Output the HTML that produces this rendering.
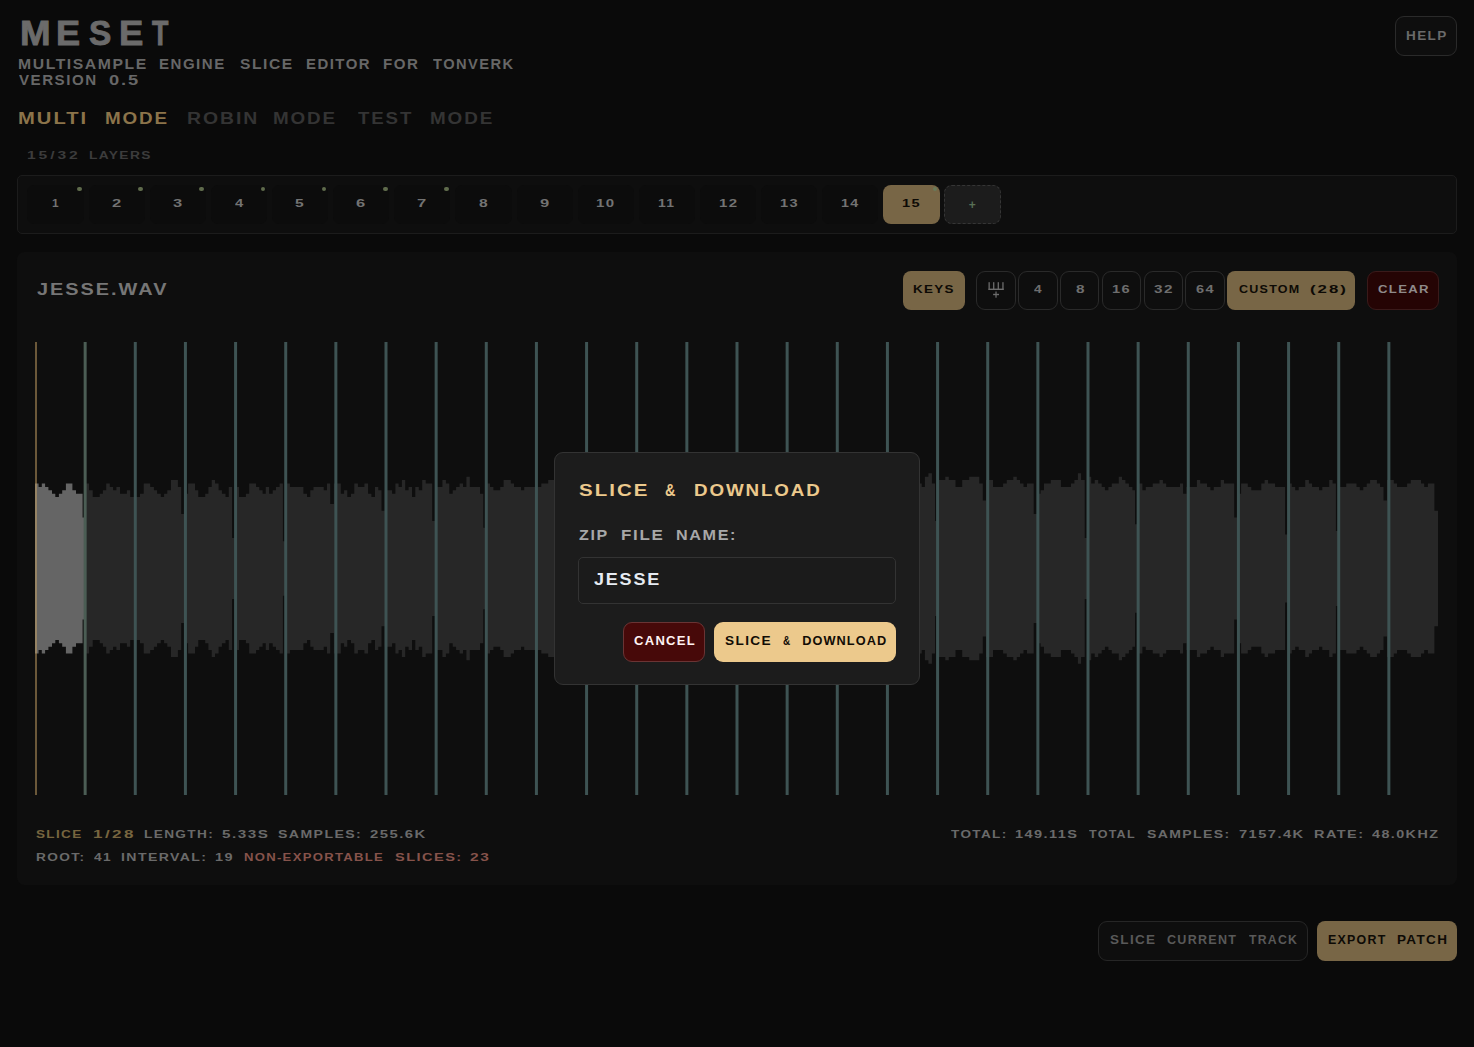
<!DOCTYPE html>
<html lang="en"><head><meta charset="utf-8"><title>MESET - Multisample Engine Slice Editor for Tonverk</title>
<style>
html,body{margin:0;padding:0;background:#0a0a0a;}
body{width:1474px;height:1047px;overflow:hidden;position:relative;font-family:'Liberation Sans',sans-serif;}
#app,#overlay{position:absolute;left:0;top:0;width:1474px;height:1047px;}
.t{position:absolute;transform-origin:0 0;font-weight:bold;white-space:pre;text-transform:uppercase;font-family:'Liberation Sans',sans-serif;}
.b{position:absolute;box-sizing:border-box;}
.wave{position:absolute;display:block;}
.l{position:static;margin:0;}

</style></head><body>
<div id="app">
<div class="b" style="left:1395.0px;top:16.0px;width:62.0px;height:40.0px;border:1px solid #2a2a2a;border-radius:9px;background:#0e0e0e"></div>
<div class="b" style="left:17.2px;top:175.3px;width:1439.8px;height:58.3px;border:1px solid #1c1c1c;border-radius:5px;background:#0e0e0e"></div>
<div class="b" style="left:27.4px;top:185.0px;width:56.2px;height:38.6px;border-radius:7px;background:#0c0c0c"></div>
<div class="b" style="left:77.0px;top:186.5px;width:4.8px;height:4.8px;border-radius:50%;background:#5f6b4c"></div>
<div class="b" style="left:88.5px;top:185.0px;width:56.2px;height:38.6px;border-radius:7px;background:#0c0c0c"></div>
<div class="b" style="left:138.2px;top:186.5px;width:4.8px;height:4.8px;border-radius:50%;background:#5f6b4c"></div>
<div class="b" style="left:149.7px;top:185.0px;width:56.2px;height:38.6px;border-radius:7px;background:#0c0c0c"></div>
<div class="b" style="left:199.3px;top:186.5px;width:4.8px;height:4.8px;border-radius:50%;background:#5f6b4c"></div>
<div class="b" style="left:210.8px;top:185.0px;width:56.2px;height:38.6px;border-radius:7px;background:#0c0c0c"></div>
<div class="b" style="left:260.5px;top:186.5px;width:4.8px;height:4.8px;border-radius:50%;background:#5f6b4c"></div>
<div class="b" style="left:272.0px;top:185.0px;width:56.2px;height:38.6px;border-radius:7px;background:#0c0c0c"></div>
<div class="b" style="left:321.6px;top:186.5px;width:4.8px;height:4.8px;border-radius:50%;background:#5f6b4c"></div>
<div class="b" style="left:333.1px;top:185.0px;width:56.2px;height:38.6px;border-radius:7px;background:#0c0c0c"></div>
<div class="b" style="left:382.8px;top:186.5px;width:4.8px;height:4.8px;border-radius:50%;background:#5f6b4c"></div>
<div class="b" style="left:394.3px;top:185.0px;width:56.2px;height:38.6px;border-radius:7px;background:#0c0c0c"></div>
<div class="b" style="left:443.9px;top:186.5px;width:4.8px;height:4.8px;border-radius:50%;background:#5f6b4c"></div>
<div class="b" style="left:455.4px;top:185.0px;width:56.2px;height:38.6px;border-radius:7px;background:#0c0c0c"></div>
<div class="b" style="left:516.6px;top:185.0px;width:56.2px;height:38.6px;border-radius:7px;background:#0c0c0c"></div>
<div class="b" style="left:577.8px;top:185.0px;width:56.2px;height:38.6px;border-radius:7px;background:#0c0c0c"></div>
<div class="b" style="left:638.9px;top:185.0px;width:56.2px;height:38.6px;border-radius:7px;background:#0c0c0c"></div>
<div class="b" style="left:700.0px;top:185.0px;width:56.2px;height:38.6px;border-radius:7px;background:#0c0c0c"></div>
<div class="b" style="left:761.2px;top:185.0px;width:56.2px;height:38.6px;border-radius:7px;background:#0c0c0c"></div>
<div class="b" style="left:822.3px;top:185.0px;width:56.2px;height:38.6px;border-radius:7px;background:#0c0c0c"></div>
<div class="b" style="left:882.8px;top:184.7px;width:57.5px;height:39.5px;border-radius:8px;background:#786646"></div>
<div class="b" style="left:932.8px;top:187px;width:4.2px;height:4.2px;border-radius:50%;background:#6a7a5a"></div>
<div class="b" style="left:944.1px;top:184.7px;width:57.1px;height:39.5px;border:1px dashed #353535;border-radius:8px;background:#1c1c1c"></div>
<div class="b" style="left:17.0px;top:252.0px;width:1440.0px;height:633.0px;border-radius:7.5px;background:#0e0e0e"></div>
<div class="b" style="left:903.0px;top:270.8px;width:62.0px;height:39.2px;border-radius:8px;background:#786646"></div>
<div class="b" style="left:976.1px;top:270.8px;width:39.7px;height:39.2px;border:1px solid #2a2a2a;border-radius:9px;background:#0e0e0e"></div>
<div class="b" style="left:1018.2px;top:270.8px;width:39.5px;height:39.2px;border:1px solid #2a2a2a;border-radius:9px;background:#0e0e0e"></div>
<div class="b" style="left:1060.0px;top:270.8px;width:38.8px;height:39.2px;border:1px solid #2a2a2a;border-radius:9px;background:#0e0e0e"></div>
<div class="b" style="left:1102.0px;top:270.8px;width:38.5px;height:39.2px;border:1px solid #2a2a2a;border-radius:9px;background:#0e0e0e"></div>
<div class="b" style="left:1143.9px;top:270.8px;width:38.8px;height:39.2px;border:1px solid #2a2a2a;border-radius:9px;background:#0e0e0e"></div>
<div class="b" style="left:1185.4px;top:270.8px;width:39.3px;height:39.2px;border:1px solid #2a2a2a;border-radius:9px;background:#0e0e0e"></div>
<div class="b" style="left:1226.9px;top:270.8px;width:128.3px;height:39.2px;border-radius:8px;background:#786646"></div>
<div class="b" style="left:1367.2px;top:270.8px;width:71.6px;height:39.2px;border:1px solid #3a1a1a;border-radius:9px;background:#250404"></div>
<svg class="wave" style="left:984px;top:278px" width="24" height="24" viewBox="0 0 24 24"><g fill="#6c6c6c"><rect x="4.5" y="4.2" width="1.3" height="7.8"/><rect x="9.05" y="4.2" width="1.3" height="7.8"/><rect x="13.65" y="4.2" width="1.3" height="7.8"/><rect x="18.3" y="4.2" width="1.3" height="7.8"/><rect x="4.5" y="10.6" width="15.1" height="1.4"/><rect x="9.1" y="15.8" width="5.9" height="1.4"/><rect x="11.4" y="13.5" width="1.25" height="6.2"/></g></svg>
<div class="b" style="left:1098.0px;top:921.0px;width:210.0px;height:40.0px;border:1px solid #262626;border-radius:9px;background:#0e0e0e"></div>
<div class="b" style="left:1317.0px;top:921.0px;width:140.0px;height:40.0px;border-radius:8px;background:#786646"></div>
<svg class="wave" width="1404" height="453" viewBox="0 0 1404 453" style="left:35px;top:342px"><path d="M50.6,226.5L50.6,175.5L50.9,175.5L50.9,141.5L54.1,141.5L54.1,148.3L57.7,148.3L57.7,155.1L64.7,155.1L64.7,151.7L67.9,151.7L67.9,148.3L71.2,148.3L71.2,141.5L74.8,141.5L74.8,144.9L78.1,144.9L78.1,148.3L81.4,148.3L81.4,144.9L85.0,144.9L85.0,151.7L91.9,151.7L91.9,148.3L95.2,148.3L95.2,155.1L105.0,155.1L105.0,151.7L108.7,151.7L108.7,141.5L115.2,141.5L115.2,144.9L118.9,144.9L118.9,148.3L122.1,148.3L122.1,151.7L125.8,151.7L125.8,155.1L129.1,155.1L129.1,151.7L132.3,151.7L132.3,148.3L136.0,148.3L136.0,138.1L142.9,138.1L142.9,144.9L146.2,144.9L146.2,172.1L149.5,172.1L149.5,151.7L153.1,151.7L153.1,141.5L160.0,141.5L160.0,148.3L163.3,148.3L163.3,155.1L170.2,155.1L170.2,151.7L173.4,151.7L173.4,144.9L176.7,144.9L176.7,138.1L180.0,138.1L180.0,141.5L183.6,141.5L183.6,148.3L186.9,148.3L186.9,151.7L190.5,151.7L190.5,155.1L193.8,155.1L193.8,144.9L197.1,144.9L197.1,195.9L200.4,195.9L200.4,144.9L204.0,144.9L204.0,155.1L210.9,155.1L210.9,151.7L214.2,151.7L214.2,141.5L221.1,141.5L221.1,144.9L224.3,144.9L224.3,148.3L227.6,148.3L227.6,151.7L230.8,151.7L230.8,144.9L234.1,144.9L234.1,151.7L237.7,151.7L237.7,148.3L241.0,148.3L241.0,144.9L244.6,144.9L244.6,141.5L247.9,141.5L247.9,199.3L251.2,199.3L251.2,141.5L254.9,141.5L254.9,144.9L268.4,144.9L268.4,151.7L272.0,151.7L272.0,155.1L275.3,155.1L275.3,148.3L278.5,148.3L278.5,144.9L288.7,144.9L288.7,148.3L292.0,148.3L292.0,141.5L295.2,141.5L295.2,161.9L298.9,161.9L298.9,141.5L305.8,141.5L305.8,151.7L309.1,151.7L309.1,148.3L312.3,148.3L312.3,155.1L316.0,155.1L316.0,151.7L319.3,151.7L319.3,141.5L322.9,141.5L322.9,144.9L329.4,144.9L329.4,141.5L333.1,141.5L333.1,151.7L336.4,151.7L336.4,155.1L340.0,155.1L340.0,144.9L343.3,144.9L343.3,148.3L346.5,148.3L346.5,168.7L349.8,168.7L349.8,148.3L357.1,148.3L357.1,151.7L360.4,151.7L360.4,141.5L363.6,141.5L363.6,144.9L366.9,144.9L366.9,138.1L370.2,138.1L370.2,148.3L373.6,148.3L373.6,144.9L377.0,144.9L377.0,155.1L380.3,155.1L380.3,144.9L383.8,144.9L383.8,148.3L387.2,148.3L387.2,138.1L390.7,138.1L390.7,141.5L397.2,141.5L397.2,178.9L400.5,178.9L400.5,144.9L407.4,144.9L407.4,138.1L410.9,138.1L410.9,141.5L414.3,141.5L414.3,151.7L417.7,151.7L417.7,148.3L421.1,148.3L421.1,144.9L424.6,144.9L424.6,141.5L428.0,141.5L428.0,144.9L431.4,144.9L431.4,134.7L434.8,134.7L434.8,144.9L445.0,144.9L445.0,151.7L448.3,151.7L448.3,185.7L451.5,185.7L451.5,141.5L455.0,141.5L455.0,144.9L458.4,144.9L458.4,148.3L465.2,148.3L465.2,144.9L468.6,144.9L468.6,138.1L475.8,138.1L475.8,141.5L479.0,141.5L479.0,144.9L486.0,144.9L486.0,148.3L489.2,148.3L489.2,144.9L506.3,144.9L506.3,141.5L513.2,141.5L513.2,138.1L519.2,138.1L519.2,144.9L520.0,144.9L520.0,148.3L523.2,148.3L523.2,151.7L526.9,151.7L526.9,155.1L530.2,155.1L530.2,151.7L533.4,151.7L533.4,148.3L537.1,148.3L537.1,138.1L544.0,138.1L544.0,144.9L547.3,144.9L547.3,172.1L550.6,172.1L550.6,151.7L554.2,151.7L554.2,141.5L561.1,141.5L561.1,148.3L564.4,148.3L564.4,155.1L571.3,155.1L571.3,151.7L574.5,151.7L574.5,144.9L577.8,144.9L577.8,138.1L581.1,138.1L581.1,141.5L584.7,141.5L584.7,148.3L588.0,148.3L588.0,151.7L591.6,151.7L591.6,155.1L594.9,155.1L594.9,144.9L598.2,144.9L598.2,195.9L601.5,195.9L601.5,144.9L605.1,144.9L605.1,155.1L612.0,155.1L612.0,151.7L615.3,151.7L615.3,141.5L622.2,141.5L622.2,144.9L625.4,144.9L625.4,148.3L628.7,148.3L628.7,151.7L631.9,151.7L631.9,144.9L635.2,144.9L635.2,151.7L638.8,151.7L638.8,148.3L642.1,148.3L642.1,144.9L645.7,144.9L645.7,141.5L649.0,141.5L649.0,199.3L652.3,199.3L652.3,141.5L656.0,141.5L656.0,144.9L669.5,144.9L669.5,151.7L673.1,151.7L673.1,155.1L676.4,155.1L676.4,148.3L679.6,148.3L679.6,144.9L689.8,144.9L689.8,148.3L693.1,148.3L693.1,141.5L696.3,141.5L696.3,161.9L700.0,161.9L700.0,141.5L706.9,141.5L706.9,151.7L710.2,151.7L710.2,148.3L713.4,148.3L713.4,155.1L717.1,155.1L717.1,151.7L720.4,151.7L720.4,141.5L724.0,141.5L724.0,144.9L730.5,144.9L730.5,141.5L734.2,141.5L734.2,151.7L737.5,151.7L737.5,155.1L741.1,155.1L741.1,144.9L744.4,144.9L744.4,148.3L747.6,148.3L747.6,168.7L750.9,168.7L750.9,148.3L758.2,148.3L758.2,151.7L761.5,151.7L761.5,141.5L764.7,141.5L764.7,144.9L768.0,144.9L768.0,138.1L771.3,138.1L771.3,148.3L774.7,148.3L774.7,144.9L778.1,144.9L778.1,155.1L781.4,155.1L781.4,144.9L784.9,144.9L784.9,148.3L788.3,148.3L788.3,138.1L791.8,138.1L791.8,141.5L798.3,141.5L798.3,178.9L801.6,178.9L801.6,144.9L808.5,144.9L808.5,138.1L812.0,138.1L812.0,141.5L815.4,141.5L815.4,151.7L818.8,151.7L818.8,148.3L822.2,148.3L822.2,144.9L825.7,144.9L825.7,141.5L829.1,141.5L829.1,144.9L832.5,144.9L832.5,134.7L835.9,134.7L835.9,144.9L846.1,144.9L846.1,151.7L849.4,151.7L849.4,185.7L852.6,185.7L852.6,141.5L856.1,141.5L856.1,144.9L859.5,144.9L859.5,148.3L866.3,148.3L866.3,144.9L869.7,144.9L869.7,138.1L876.9,138.1L876.9,141.5L880.1,141.5L880.1,144.9L884.9,144.9L884.9,141.5L886.7,141.5L886.7,144.9L889.9,144.9L889.9,134.7L893.4,134.7L893.4,131.3L896.9,131.3L896.9,141.5L900.1,141.5L900.1,178.9L903.3,178.9L903.3,138.1L910.3,138.1L910.3,134.7L913.8,134.7L913.8,138.1L920.5,138.1L920.5,144.9L927.2,144.9L927.2,138.1L934.2,138.1L934.2,134.7L944.3,134.7L944.3,141.5L947.8,141.5L947.8,158.5L951.0,158.5L951.0,138.1L958.0,138.1L958.0,144.9L968.1,144.9L968.1,141.5L971.8,141.5L971.8,138.1L978.3,138.1L978.3,134.7L981.8,134.7L981.8,138.1L985.0,138.1L985.0,141.5L988.5,141.5L988.5,144.9L992.0,144.9L992.0,141.5L998.7,141.5L998.7,172.1L1002.0,172.1L1002.0,151.7L1005.6,151.7L1005.6,148.3L1009.0,148.3L1009.0,141.5L1015.8,141.5L1015.8,138.1L1025.9,138.1L1025.9,144.9L1036.0,144.9L1036.0,141.5L1039.4,141.5L1039.4,138.1L1042.9,138.1L1042.9,131.3L1046.1,131.3L1046.1,138.1L1049.7,138.1L1049.7,195.9L1053.0,195.9L1053.0,134.7L1056.2,134.7L1056.2,141.5L1059.7,141.5L1059.7,138.1L1063.2,138.1L1063.2,141.5L1066.7,141.5L1066.7,144.9L1069.9,144.9L1069.9,148.3L1073.4,148.3L1073.4,144.9L1076.8,144.9L1076.8,141.5L1083.8,141.5L1083.8,134.7L1087.0,134.7L1087.0,138.1L1090.4,138.1L1090.4,141.5L1093.9,141.5L1093.9,144.9L1097.4,144.9L1097.4,148.3L1100.0,148.3L1100.0,182.3L1103.3,182.3L1103.3,141.5L1107.4,141.5L1107.4,148.3L1110.8,148.3L1110.8,144.9L1117.7,144.9L1117.7,141.5L1124.5,141.5L1124.5,138.1L1127.9,138.1L1127.9,141.5L1131.2,141.5L1131.2,144.9L1145.0,144.9L1145.0,141.5L1148.1,141.5L1148.1,151.7L1151.5,151.7L1151.5,144.9L1161.9,144.9L1161.9,138.1L1165.2,138.1L1165.2,141.5L1172.0,141.5L1172.0,144.9L1175.4,144.9L1175.4,148.3L1178.8,148.3L1178.8,144.9L1185.7,144.9L1185.7,138.1L1189.0,138.1L1189.0,141.5L1199.2,141.5L1199.2,175.5L1202.5,175.5L1202.5,151.7L1206.1,151.7L1206.1,141.5L1212.8,141.5L1212.8,144.9L1216.3,144.9L1216.3,148.3L1226.3,148.3L1226.3,141.5L1229.6,141.5L1229.6,138.1L1233.1,138.1L1233.1,141.5L1240.1,141.5L1240.1,144.9L1250.1,144.9L1250.1,192.5L1253.4,192.5L1253.4,141.5L1256.8,141.5L1256.8,144.9L1260.2,144.9L1260.2,148.3L1263.7,148.3L1263.7,144.9L1270.2,144.9L1270.2,138.1L1273.9,138.1L1273.9,141.5L1277.1,141.5L1277.1,144.9L1284.0,144.9L1284.0,148.3L1287.3,148.3L1287.3,144.9L1294.2,144.9L1294.2,138.1L1297.6,138.1L1297.6,141.5L1300.9,141.5L1300.9,189.1L1304.2,189.1L1304.2,144.9L1311.2,144.9L1311.2,141.5L1321.5,141.5L1321.5,144.9L1324.8,144.9L1324.8,148.3L1328.3,148.3L1328.3,144.9L1331.7,144.9L1331.7,141.5L1335.1,141.5L1335.1,138.1L1341.9,138.1L1341.9,141.5L1345.1,141.5L1345.1,144.9L1348.5,144.9L1348.5,158.5L1352.0,158.5L1352.0,138.1L1358.8,138.1L1358.8,141.5L1362.0,141.5L1362.0,144.9L1372.1,144.9L1372.1,141.5L1375.8,141.5L1375.8,138.1L1386.0,138.1L1386.0,141.5L1389.2,141.5L1389.2,144.9L1392.9,144.9L1392.9,141.5L1399.4,141.5L1399.4,168.7L1403.0,168.7L1403.0,226.5L1403.0,284.3L1399.4,284.3L1399.4,311.5L1392.9,311.5L1392.9,308.1L1389.2,308.1L1389.2,311.5L1386.0,311.5L1386.0,314.9L1375.8,314.9L1375.8,311.5L1372.1,311.5L1372.1,308.1L1362.0,308.1L1362.0,311.5L1358.8,311.5L1358.8,314.9L1352.0,314.9L1352.0,294.5L1348.5,294.5L1348.5,308.1L1345.1,308.1L1345.1,311.5L1341.9,311.5L1341.9,314.9L1335.1,314.9L1335.1,311.5L1331.7,311.5L1331.7,308.1L1328.3,308.1L1328.3,304.7L1324.8,304.7L1324.8,308.1L1321.5,308.1L1321.5,311.5L1311.2,311.5L1311.2,308.1L1304.2,308.1L1304.2,263.9L1300.9,263.9L1300.9,311.5L1297.6,311.5L1297.6,314.9L1294.2,314.9L1294.2,308.1L1287.3,308.1L1287.3,304.7L1284.0,304.7L1284.0,308.1L1277.1,308.1L1277.1,311.5L1273.9,311.5L1273.9,314.9L1270.2,314.9L1270.2,308.1L1263.7,308.1L1263.7,304.7L1260.2,304.7L1260.2,308.1L1256.8,308.1L1256.8,311.5L1253.4,311.5L1253.4,260.5L1250.1,260.5L1250.1,308.1L1240.1,308.1L1240.1,311.5L1233.1,311.5L1233.1,314.9L1229.6,314.9L1229.6,311.5L1226.3,311.5L1226.3,304.7L1216.3,304.7L1216.3,308.1L1212.8,308.1L1212.8,311.5L1206.1,311.5L1206.1,301.3L1202.5,301.3L1202.5,277.5L1199.2,277.5L1199.2,311.5L1189.0,311.5L1189.0,314.9L1185.7,314.9L1185.7,308.1L1178.8,308.1L1178.8,304.7L1175.4,304.7L1175.4,308.1L1172.0,308.1L1172.0,311.5L1165.2,311.5L1165.2,314.9L1161.9,314.9L1161.9,308.1L1151.5,308.1L1151.5,301.3L1148.1,301.3L1148.1,311.5L1145.0,311.5L1145.0,308.1L1131.2,308.1L1131.2,311.5L1127.9,311.5L1127.9,314.9L1124.5,314.9L1124.5,311.5L1117.7,311.5L1117.7,308.1L1110.8,308.1L1110.8,304.7L1107.4,304.7L1107.4,311.5L1103.3,311.5L1103.3,270.7L1100.0,270.7L1100.0,304.7L1097.4,304.7L1097.4,308.1L1093.9,308.1L1093.9,311.5L1090.4,311.5L1090.4,314.9L1087.0,314.9L1087.0,318.3L1083.8,318.3L1083.8,311.5L1076.8,311.5L1076.8,308.1L1073.4,308.1L1073.4,304.7L1069.9,304.7L1069.9,308.1L1066.7,308.1L1066.7,311.5L1063.2,311.5L1063.2,314.9L1059.7,314.9L1059.7,311.5L1056.2,311.5L1056.2,318.3L1053.0,318.3L1053.0,257.1L1049.7,257.1L1049.7,314.9L1046.1,314.9L1046.1,321.7L1042.9,321.7L1042.9,314.9L1039.4,314.9L1039.4,311.5L1036.0,311.5L1036.0,308.1L1025.9,308.1L1025.9,314.9L1015.8,314.9L1015.8,311.5L1009.0,311.5L1009.0,304.7L1005.6,304.7L1005.6,301.3L1002.0,301.3L1002.0,280.9L998.7,280.9L998.7,311.5L992.0,311.5L992.0,308.1L988.5,308.1L988.5,311.5L985.0,311.5L985.0,314.9L981.8,314.9L981.8,318.3L978.3,318.3L978.3,314.9L971.8,314.9L971.8,311.5L968.1,311.5L968.1,308.1L958.0,308.1L958.0,314.9L951.0,314.9L951.0,294.5L947.8,294.5L947.8,311.5L944.3,311.5L944.3,318.3L934.2,318.3L934.2,314.9L927.2,314.9L927.2,308.1L920.5,308.1L920.5,314.9L913.8,314.9L913.8,318.3L910.3,318.3L910.3,314.9L903.3,314.9L903.3,274.1L900.1,274.1L900.1,311.5L896.9,311.5L896.9,321.7L893.4,321.7L893.4,318.3L889.9,318.3L889.9,308.1L886.7,308.1L886.7,311.5L884.9,311.5L884.9,308.1L880.1,308.1L880.1,311.5L876.9,311.5L876.9,314.9L869.7,314.9L869.7,308.1L866.3,308.1L866.3,304.7L859.5,304.7L859.5,308.1L856.1,308.1L856.1,311.5L852.6,311.5L852.6,267.3L849.4,267.3L849.4,301.3L846.1,301.3L846.1,308.1L835.9,308.1L835.9,318.3L832.5,318.3L832.5,308.1L829.1,308.1L829.1,311.5L825.7,311.5L825.7,308.1L822.2,308.1L822.2,304.7L818.8,304.7L818.8,301.3L815.4,301.3L815.4,311.5L812.0,311.5L812.0,314.9L808.5,314.9L808.5,308.1L801.6,308.1L801.6,274.1L798.3,274.1L798.3,311.5L791.8,311.5L791.8,314.9L788.3,314.9L788.3,304.7L784.9,304.7L784.9,308.1L781.4,308.1L781.4,297.9L778.1,297.9L778.1,308.1L774.7,308.1L774.7,304.7L771.3,304.7L771.3,314.9L768.0,314.9L768.0,308.1L764.7,308.1L764.7,311.5L761.5,311.5L761.5,301.3L758.2,301.3L758.2,304.7L750.9,304.7L750.9,284.3L747.6,284.3L747.6,304.7L744.4,304.7L744.4,308.1L741.1,308.1L741.1,297.9L737.5,297.9L737.5,301.3L734.2,301.3L734.2,311.5L730.5,311.5L730.5,308.1L724.0,308.1L724.0,311.5L720.4,311.5L720.4,301.3L717.1,301.3L717.1,297.9L713.4,297.9L713.4,304.7L710.2,304.7L710.2,301.3L706.9,301.3L706.9,311.5L700.0,311.5L700.0,291.1L696.3,291.1L696.3,311.5L693.1,311.5L693.1,304.7L689.8,304.7L689.8,308.1L679.6,308.1L679.6,304.7L676.4,304.7L676.4,297.9L673.1,297.9L673.1,301.3L669.5,301.3L669.5,308.1L656.0,308.1L656.0,311.5L652.3,311.5L652.3,253.7L649.0,253.7L649.0,311.5L645.7,311.5L645.7,308.1L642.1,308.1L642.1,304.7L638.8,304.7L638.8,301.3L635.2,301.3L635.2,308.1L631.9,308.1L631.9,301.3L628.7,301.3L628.7,304.7L625.4,304.7L625.4,308.1L622.2,308.1L622.2,311.5L615.3,311.5L615.3,301.3L612.0,301.3L612.0,297.9L605.1,297.9L605.1,308.1L601.5,308.1L601.5,257.1L598.2,257.1L598.2,308.1L594.9,308.1L594.9,297.9L591.6,297.9L591.6,301.3L588.0,301.3L588.0,304.7L584.7,304.7L584.7,311.5L581.1,311.5L581.1,314.9L577.8,314.9L577.8,308.1L574.5,308.1L574.5,301.3L571.3,301.3L571.3,297.9L564.4,297.9L564.4,304.7L561.1,304.7L561.1,311.5L554.2,311.5L554.2,301.3L550.6,301.3L550.6,280.9L547.3,280.9L547.3,308.1L544.0,308.1L544.0,314.9L537.1,314.9L537.1,304.7L533.4,304.7L533.4,301.3L530.2,301.3L530.2,297.9L526.9,297.9L526.9,301.3L523.2,301.3L523.2,304.7L520.0,304.7L520.0,308.1L519.2,308.1L519.2,314.9L513.2,314.9L513.2,311.5L506.3,311.5L506.3,308.1L489.2,308.1L489.2,304.7L486.0,304.7L486.0,308.1L479.0,308.1L479.0,311.5L475.8,311.5L475.8,314.9L468.6,314.9L468.6,308.1L465.2,308.1L465.2,304.7L458.4,304.7L458.4,308.1L455.0,308.1L455.0,311.5L451.5,311.5L451.5,267.3L448.3,267.3L448.3,301.3L445.0,301.3L445.0,308.1L434.8,308.1L434.8,318.3L431.4,318.3L431.4,308.1L428.0,308.1L428.0,311.5L424.6,311.5L424.6,308.1L421.1,308.1L421.1,304.7L417.7,304.7L417.7,301.3L414.3,301.3L414.3,311.5L410.9,311.5L410.9,314.9L407.4,314.9L407.4,308.1L400.5,308.1L400.5,274.1L397.2,274.1L397.2,311.5L390.7,311.5L390.7,314.9L387.2,314.9L387.2,304.7L383.8,304.7L383.8,308.1L380.3,308.1L380.3,297.9L377.0,297.9L377.0,308.1L373.6,308.1L373.6,304.7L370.2,304.7L370.2,314.9L366.9,314.9L366.9,308.1L363.6,308.1L363.6,311.5L360.4,311.5L360.4,301.3L357.1,301.3L357.1,304.7L349.8,304.7L349.8,284.3L346.5,284.3L346.5,304.7L343.3,304.7L343.3,308.1L340.0,308.1L340.0,297.9L336.4,297.9L336.4,301.3L333.1,301.3L333.1,311.5L329.4,311.5L329.4,308.1L322.9,308.1L322.9,311.5L319.3,311.5L319.3,301.3L316.0,301.3L316.0,297.9L312.3,297.9L312.3,304.7L309.1,304.7L309.1,301.3L305.8,301.3L305.8,311.5L298.9,311.5L298.9,291.1L295.2,291.1L295.2,311.5L292.0,311.5L292.0,304.7L288.7,304.7L288.7,308.1L278.5,308.1L278.5,304.7L275.3,304.7L275.3,297.9L272.0,297.9L272.0,301.3L268.4,301.3L268.4,308.1L254.9,308.1L254.9,311.5L251.2,311.5L251.2,253.7L247.9,253.7L247.9,311.5L244.6,311.5L244.6,308.1L241.0,308.1L241.0,304.7L237.7,304.7L237.7,301.3L234.1,301.3L234.1,308.1L230.8,308.1L230.8,301.3L227.6,301.3L227.6,304.7L224.3,304.7L224.3,308.1L221.1,308.1L221.1,311.5L214.2,311.5L214.2,301.3L210.9,301.3L210.9,297.9L204.0,297.9L204.0,308.1L200.4,308.1L200.4,257.1L197.1,257.1L197.1,308.1L193.8,308.1L193.8,297.9L190.5,297.9L190.5,301.3L186.9,301.3L186.9,304.7L183.6,304.7L183.6,311.5L180.0,311.5L180.0,314.9L176.7,314.9L176.7,308.1L173.4,308.1L173.4,301.3L170.2,301.3L170.2,297.9L163.3,297.9L163.3,304.7L160.0,304.7L160.0,311.5L153.1,311.5L153.1,301.3L149.5,301.3L149.5,280.9L146.2,280.9L146.2,308.1L142.9,308.1L142.9,314.9L136.0,314.9L136.0,304.7L132.3,304.7L132.3,301.3L129.1,301.3L129.1,297.9L125.8,297.9L125.8,301.3L122.1,301.3L122.1,304.7L118.9,304.7L118.9,308.1L115.2,308.1L115.2,311.5L108.7,311.5L108.7,301.3L105.0,301.3L105.0,297.9L95.2,297.9L95.2,304.7L91.9,304.7L91.9,301.3L85.0,301.3L85.0,308.1L81.4,308.1L81.4,304.7L78.1,304.7L78.1,308.1L74.8,308.1L74.8,311.5L71.2,311.5L71.2,304.7L67.9,304.7L67.9,301.3L64.7,301.3L64.7,297.9L57.7,297.9L57.7,304.7L54.1,304.7L54.1,311.5L50.9,311.5L50.9,277.5L50.6,277.5Z" fill="#272727"/><path d="M0.0,226.5L0.0,141.5L3.6,141.5L3.6,144.9L6.8,144.9L6.8,141.5L10.1,141.5L10.1,144.9L13.4,144.9L13.4,148.3L17.0,148.3L17.0,151.7L20.3,151.7L20.3,155.1L23.9,155.1L23.9,151.7L27.2,151.7L27.2,148.3L30.9,148.3L30.9,141.5L37.4,141.5L37.4,148.3L41.0,148.3L41.0,151.7L47.6,151.7L47.6,175.5L50.6,175.5L50.6,226.5L50.6,277.5L47.6,277.5L47.6,301.3L41.0,301.3L41.0,304.7L37.4,304.7L37.4,311.5L30.9,311.5L30.9,304.7L27.2,304.7L27.2,301.3L23.9,301.3L23.9,297.9L20.3,297.9L20.3,301.3L17.0,301.3L17.0,304.7L13.4,304.7L13.4,308.1L10.1,308.1L10.1,311.5L6.8,311.5L6.8,308.1L3.6,308.1L3.6,311.5L0.0,311.5Z" fill="#656565"/><rect x="48.64" y="0" width="3.0" height="453" fill="#4b5d54"/><rect x="98.79" y="0" width="3.0" height="453" fill="#3e5353"/><rect x="148.93" y="0" width="3.0" height="453" fill="#3e5353"/><rect x="199.07" y="0" width="3.0" height="453" fill="#3e5353"/><rect x="249.21" y="0" width="3.0" height="453" fill="#3e5353"/><rect x="299.36" y="0" width="3.0" height="453" fill="#3e5353"/><rect x="349.50" y="0" width="3.0" height="453" fill="#3e5353"/><rect x="399.64" y="0" width="3.0" height="453" fill="#3e5353"/><rect x="449.79" y="0" width="3.0" height="453" fill="#3e5353"/><rect x="499.93" y="0" width="3.0" height="453" fill="#3e5353"/><rect x="550.07" y="0" width="3.0" height="453" fill="#3e5353"/><rect x="600.21" y="0" width="3.0" height="453" fill="#3e5353"/><rect x="650.36" y="0" width="3.0" height="453" fill="#3e5353"/><rect x="700.50" y="0" width="3.0" height="453" fill="#3e5353"/><rect x="750.64" y="0" width="3.0" height="453" fill="#3e5353"/><rect x="800.79" y="0" width="3.0" height="453" fill="#3e5353"/><rect x="850.93" y="0" width="3.0" height="453" fill="#3e5353"/><rect x="901.07" y="0" width="3.0" height="453" fill="#3e5353"/><rect x="951.21" y="0" width="3.0" height="453" fill="#3e5353"/><rect x="1001.36" y="0" width="3.0" height="453" fill="#3e5353"/><rect x="1051.50" y="0" width="3.0" height="453" fill="#3e5353"/><rect x="1101.64" y="0" width="3.0" height="453" fill="#3e5353"/><rect x="1151.79" y="0" width="3.0" height="453" fill="#3e5353"/><rect x="1201.93" y="0" width="3.0" height="453" fill="#3e5353"/><rect x="1252.07" y="0" width="3.0" height="453" fill="#3e5353"/><rect x="1302.21" y="0" width="3.0" height="453" fill="#3e5353"/><rect x="1352.36" y="0" width="3.0" height="453" fill="#3e5353"/><rect x="0" y="0" width="2" height="453" fill="#c8a264" fill-opacity="0.5"/></svg>
<div class="l" style="font-size:12.00px;line-height:12.00px;color:#587055"><span class="t" style="left:968.80px;top:199px;">+</span></div>
<div class="l" style="font-size:35.14px;line-height:35.14px;color:#6b6b6b"><span class="t" style="left:19.51px;top:15px;transform:scaleX(1.046);-webkit-text-stroke:0.9px #6b6b6b;">M</span><span class="t" style="left:56.34px;top:15px;transform:scaleX(1.028);-webkit-text-stroke:0.9px #6b6b6b;">E</span><span class="t" style="left:89.27px;top:15px;transform:scaleX(0.951);-webkit-text-stroke:0.9px #6b6b6b;">S</span><span class="t" style="left:118.82px;top:15px;transform:scaleX(1.038);-webkit-text-stroke:0.9px #6b6b6b;">E</span><span class="t" style="left:152.00px;top:15px;transform:scaleX(0.764);-webkit-text-stroke:0.9px #6b6b6b;">T</span></div>
<div class="l" style="font-size:14.35px;line-height:14.35px;color:#676767"><span class="t" style="left:17.70px;top:57px;letter-spacing:1.43px;transform:scaleX(1.098);">MULTISAMPLE</span> <span class="t" style="left:159.45px;top:57px;letter-spacing:1.43px;transform:scaleX(1.049);">ENGINE</span> <span class="t" style="left:239.54px;top:57px;letter-spacing:1.43px;transform:scaleX(1.088);">SLICE</span> <span class="t" style="left:305.56px;top:57px;letter-spacing:1.43px;transform:scaleX(1.041);">EDITOR</span> <span class="t" style="left:382.85px;top:57px;letter-spacing:1.43px;transform:scaleX(1.054);">FOR</span> <span class="t" style="left:432.70px;top:57px;letter-spacing:1.43px;transform:scaleX(1.022);">TONVERK</span></div>
<div class="l" style="font-size:14.49px;line-height:14.49px;color:#676767"><span class="t" style="left:18.70px;top:73px;letter-spacing:1.45px;transform:scaleX(1.043);">VERSION</span> <span class="t" style="left:109.06px;top:73px;letter-spacing:1.45px;transform:scaleX(1.264);">0.5</span></div>
<div class="l" style="font-size:16.52px;line-height:16.52px;color:#8c744a"><span class="t" style="left:17.78px;top:111px;letter-spacing:1.65px;transform:scaleX(1.222);">MULTI</span> <span class="t" style="left:104.96px;top:111px;letter-spacing:1.65px;transform:scaleX(1.141);">MODE</span></div>
<div class="l" style="font-size:16.52px;line-height:16.52px;color:#343434"><span class="t" style="left:187.12px;top:111px;letter-spacing:1.65px;transform:scaleX(1.175);">ROBIN</span> <span class="t" style="left:273.46px;top:111px;letter-spacing:1.65px;transform:scaleX(1.141);">MODE</span></div>
<div class="l" style="font-size:16.52px;line-height:16.52px;color:#343434"><span class="t" style="left:357.90px;top:111px;letter-spacing:1.65px;transform:scaleX(1.131);">TEST</span> <span class="t" style="left:430.06px;top:111px;letter-spacing:1.65px;transform:scaleX(1.142);">MODE</span></div>
<div class="l" style="font-size:10.78px;line-height:10.78px;color:#3c3c3c"><span class="t" style="left:26.53px;top:150px;letter-spacing:2.00px;transform:scaleX(1.450);">15/32</span> <span class="t" style="left:89.05px;top:150px;letter-spacing:1.08px;transform:scaleX(1.277);">LAYERS</span></div>
<div class="l" style="font-size:11.58px;line-height:11.58px;color:#737373"><span class="t" style="left:51.52px;top:198px;transform:scaleX(1.024);">1</span> <span class="t" style="left:111.72px;top:198px;transform:scaleX(1.429);">2</span> <span class="t" style="left:172.87px;top:198px;transform:scaleX(1.429);">3</span> <span class="t" style="left:234.50px;top:198px;transform:scaleX(1.279);">4</span> <span class="t" style="left:295.20px;top:198px;transform:scaleX(1.350);">5</span> <span class="t" style="left:356.32px;top:198px;transform:scaleX(1.429);">6</span> <span class="t" style="left:417.47px;top:198px;transform:scaleX(1.429);">7</span> <span class="t" style="left:478.65px;top:198px;transform:scaleX(1.350);">8</span> <span class="t" style="left:539.77px;top:198px;transform:scaleX(1.429);">9</span> <span class="t" style="left:596.29px;top:198px;letter-spacing:1.16px;transform:scaleX(1.294);">10</span> <span class="t" style="left:658.30px;top:198px;letter-spacing:1.16px;transform:scaleX(1.201);">11</span> <span class="t" style="left:718.59px;top:198px;letter-spacing:1.16px;transform:scaleX(1.294);">12</span> <span class="t" style="left:779.76px;top:198px;letter-spacing:1.16px;transform:scaleX(1.262);">13</span> <span class="t" style="left:840.93px;top:198px;letter-spacing:1.16px;transform:scaleX(1.230);">14</span></div>
<div class="l" style="font-size:11.58px;line-height:11.58px;color:#0d0a05"><span class="t" style="left:902.06px;top:198px;letter-spacing:1.16px;transform:scaleX(1.262);">15</span></div>
<div class="l" style="font-size:16.66px;line-height:16.66px;color:#767676"><span class="t" style="left:37.10px;top:282px;letter-spacing:1.67px;transform:scaleX(1.194);">JESSE.WAV</span></div>
<div class="l" style="font-size:11.59px;line-height:11.59px;color:#0d0a05"><span class="t" style="left:913.43px;top:284px;letter-spacing:1.16px;transform:scaleX(1.157);">KEYS</span></div>
<div class="l" style="font-size:10.90px;line-height:10.90px;color:#6e6e6e"><span class="t" style="left:1034.30px;top:284px;transform:scaleX(1.250);">4</span> <span class="t" style="left:1075.53px;top:284px;transform:scaleX(1.406);">8</span> <span class="t" style="left:1112.10px;top:284px;letter-spacing:1.09px;transform:scaleX(1.344);">16</span> <span class="t" style="left:1154.23px;top:284px;letter-spacing:1.09px;transform:scaleX(1.401);">32</span> <span class="t" style="left:1196.15px;top:284px;letter-spacing:1.09px;transform:scaleX(1.337);">64</span></div>
<div class="l" style="font-size:11.59px;line-height:11.59px;color:#0d0a05"><span class="t" style="left:1238.74px;top:284px;letter-spacing:1.16px;transform:scaleX(1.080);">CUSTOM</span> <span class="t" style="left:1310.23px;top:284px;letter-spacing:1.37px;transform:scaleX(1.450);">(28)</span></div>
<div class="l" style="font-size:11.59px;line-height:11.59px;color:#8f8a8a"><span class="t" style="left:1377.82px;top:284px;letter-spacing:1.16px;transform:scaleX(1.135);">CLEAR</span></div>
<div class="l" style="font-size:11.88px;line-height:11.88px;color:#6a6a6a"><span class="t" style="left:1405.84px;top:31px;letter-spacing:1.19px;transform:scaleX(1.142);">HELP</span></div>
<div class="l" style="font-size:11.74px;line-height:11.74px;color:#77653f"><span class="t" style="left:36.12px;top:828px;letter-spacing:1.17px;transform:scaleX(1.152);">SLICE</span> <span class="t" style="left:92.73px;top:828px;letter-spacing:1.68px;transform:scaleX(1.450);">1/28</span></div>
<div class="l" style="font-size:11.74px;line-height:11.74px;color:#6a6a6a"><span class="t" style="left:143.53px;top:828px;letter-spacing:1.17px;transform:scaleX(1.162);">LENGTH:</span> <span class="t" style="left:221.77px;top:828px;letter-spacing:1.17px;transform:scaleX(1.297);">5.33S</span> <span class="t" style="left:278.00px;top:828px;letter-spacing:1.17px;transform:scaleX(1.202);">SAMPLES:</span> <span class="t" style="left:370.38px;top:828px;letter-spacing:1.17px;transform:scaleX(1.266);">255.6K</span></div>
<div class="l" style="font-size:11.74px;line-height:11.74px;color:#6a6a6a"><span class="t" style="left:35.72px;top:851px;letter-spacing:1.17px;transform:scaleX(1.166);">ROOT:</span> <span class="t" style="left:93.70px;top:851px;letter-spacing:1.17px;transform:scaleX(1.170);">41</span> <span class="t" style="left:121.10px;top:851px;letter-spacing:1.17px;transform:scaleX(1.200);">INTERVAL:</span> <span class="t" style="left:215.18px;top:851px;letter-spacing:1.17px;transform:scaleX(1.230);">19</span></div>
<div class="l" style="font-size:11.74px;line-height:11.74px;color:#86534b"><span class="t" style="left:243.96px;top:851px;letter-spacing:1.17px;transform:scaleX(1.114);">NON-EXPORTABLE</span> <span class="t" style="left:394.69px;top:851px;letter-spacing:1.17px;transform:scaleX(1.241);">SLICES:</span> <span class="t" style="left:469.96px;top:851px;letter-spacing:1.17px;transform:scaleX(1.318);">23</span></div>
<div class="l" style="font-size:11.74px;line-height:11.74px;color:#6a6a6a"><span class="t" style="left:950.70px;top:828px;letter-spacing:1.17px;transform:scaleX(1.156);">TOTAL:</span> <span class="t" style="left:1015.38px;top:828px;letter-spacing:1.17px;transform:scaleX(1.236);">149.11S</span> <span class="t" style="left:1089.10px;top:828px;letter-spacing:1.17px;transform:scaleX(1.067);">TOTAL</span> <span class="t" style="left:1147.30px;top:828px;letter-spacing:1.17px;transform:scaleX(1.195);">SAMPLES:</span> <span class="t" style="left:1239.18px;top:828px;letter-spacing:1.17px;transform:scaleX(1.248);">7157.4K</span> <span class="t" style="left:1313.78px;top:828px;letter-spacing:1.17px;transform:scaleX(1.236);">RATE:</span> <span class="t" style="left:1372.10px;top:828px;letter-spacing:1.17px;transform:scaleX(1.221);">48.0KHZ</span></div>
<div class="l" style="font-size:12.17px;line-height:12.17px;color:#595959"><span class="t" style="left:1109.73px;top:934px;letter-spacing:1.22px;transform:scaleX(1.109);">SLICE</span> <span class="t" style="left:1167.06px;top:934px;letter-spacing:1.22px;transform:scaleX(1.033);">CURRENT</span> <span class="t" style="left:1249.40px;top:934px;letter-spacing:1.22px;transform:scaleX(1.011);">TRACK</span></div>
<div class="l" style="font-size:12.17px;line-height:12.17px;color:#0d0a05"><span class="t" style="left:1327.62px;top:934px;letter-spacing:1.22px;transform:scaleX(1.021);">EXPORT</span> <span class="t" style="left:1397.16px;top:934px;letter-spacing:1.22px;transform:scaleX(1.112);">PATCH</span></div>
</div>
<div id="overlay">
<div class="b" style="left:554.0px;top:452.0px;width:366.0px;height:233.0px;border:1px solid #333;border-radius:9px;background:#1c1c1c"></div>
<div class="b" style="left:578.0px;top:557.0px;width:318.0px;height:47.0px;border:1px solid #333;border-radius:5px;background:#1b1b1b"></div>
<div class="b" style="left:623.0px;top:622.1px;width:81.9px;height:40.0px;border:1px solid #6a3434;border-radius:9px;background:#470909"></div>
<div class="b" style="left:713.8px;top:621.8px;width:182.4px;height:40.4px;border-radius:9px;background:#ecc98c"></div>
<div class="l" style="font-size:17.25px;line-height:17.25px;color:#ecc98c"><span class="t" style="left:579.01px;top:482px;letter-spacing:1.73px;transform:scaleX(1.186);">SLICE</span> <span class="t" style="left:665.34px;top:482px;transform:scaleX(0.838);">&amp;</span> <span class="t" style="left:693.91px;top:482px;letter-spacing:1.73px;transform:scaleX(1.088);">DOWNLOAD</span></div>
<div class="l" style="font-size:14.93px;line-height:14.93px;color:#a8a8a8"><span class="t" style="left:579.44px;top:528px;letter-spacing:1.49px;transform:scaleX(1.074);">ZIP</span> <span class="t" style="left:620.66px;top:528px;letter-spacing:1.49px;transform:scaleX(1.135);">FILE</span> <span class="t" style="left:675.82px;top:528px;letter-spacing:1.49px;transform:scaleX(1.083);">NAME:</span></div>
<div class="l" style="font-size:17.25px;line-height:17.25px;color:#e6ebf2"><span class="t" style="left:593.75px;top:571px;letter-spacing:1.73px;transform:scaleX(1.043);">JESSE</span></div>
<div class="l" style="font-size:12.75px;line-height:12.75px;color:#fff2f2"><span class="t" style="left:633.56px;top:635px;letter-spacing:1.28px;transform:scaleX(1.021);">CANCEL</span></div>
<div class="l" style="font-size:12.75px;line-height:12.75px;color:#120c05"><span class="t" style="left:725.34px;top:635px;letter-spacing:1.28px;transform:scaleX(1.069);">SLICE</span> <span class="t" style="left:783.18px;top:635px;transform:scaleX(0.780);">&amp;</span> <span class="t" style="left:802.13px;top:635px;letter-spacing:1.08px;transform:scaleX(1.000);">DOWNLOAD</span></div>
</div>
</body></html>
